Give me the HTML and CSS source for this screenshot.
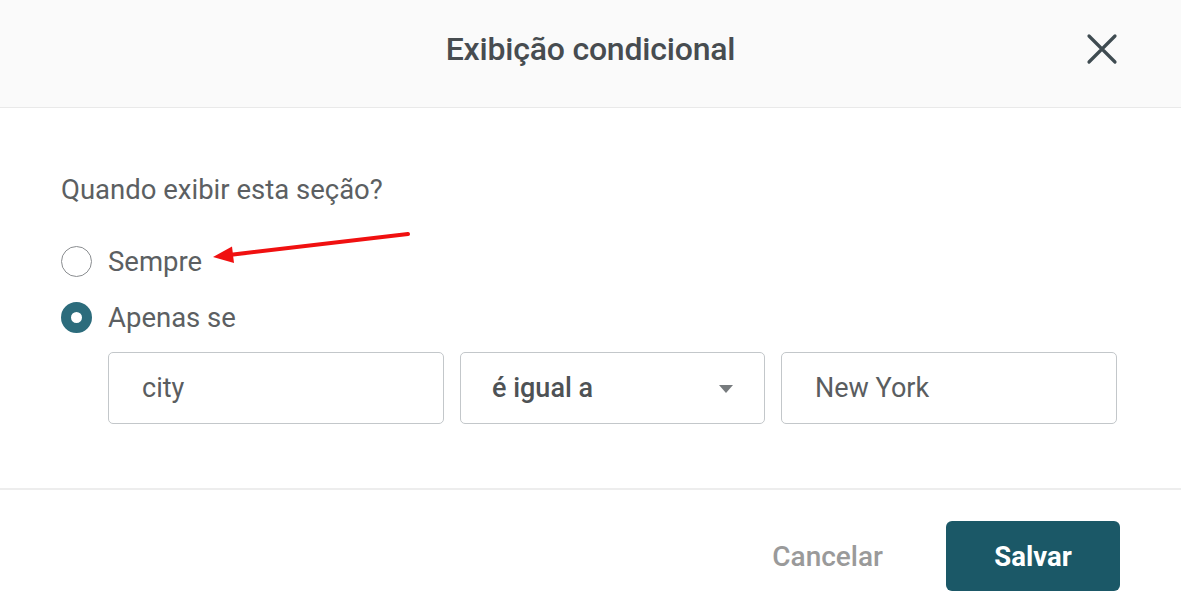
FILE: index.html
```
<!DOCTYPE html>
<html lang="pt">
<head>
<meta charset="utf-8">
<link rel="stylesheet" href="styles.css">
</head>
<body>
<div class="modal">
  <header class="header">
    <span></span>
    <h1 class="title">Exibição condicional</h1>
    <button class="close" aria-label="Fechar">
      <svg width="32" height="32" viewBox="0 0 32 32"><path d="M3 3 L29 29 M29 3 L3 29" stroke="#3f4b51" stroke-width="3.2" stroke-linecap="round" fill="none"/></svg>
    </button>
  </header>
  <section class="content">
    <p class="question">Quando exibir esta seção?</p>
    <div class="options">
      <label class="option"><span class="radio"></span><span class="option-label">Sempre</span></label>
      <label class="option"><span class="radio checked"></span><span class="option-label">Apenas se</span></label>
    </div>
    <div class="fields">
      <div class="field">city</div>
      <div class="field select"><span>é igual a</span><span class="caret"></span></div>
      <div class="field">New York</div>
    </div>
    <svg class="arrow" width="220" height="40" viewBox="0 0 220 40">
      <line x1="203" y1="6" x2="24" y2="27" stroke="#f01010" stroke-width="4" stroke-linecap="round"/>
      <polygon points="8,29 29,35 27,18.5" fill="#f01010"/>
    </svg>
  </section>
  <footer class="footer">
    <button class="btn-cancel">Cancelar</button>
    <button class="btn-save">Salvar</button>
  </footer>
</div>
</body>
</html>
```
FILE: styles.css
```
* { box-sizing: border-box; }
html, body { margin: 0; padding: 0; background: #fff; }
body { font-family: Roboto, "Liberation Sans", Arial, sans-serif; color: #555; width: 1181px; height: 602px; overflow: hidden; }
.modal { width: 1181px; }
.header {
  height: 108px;
  background: #fafafa;
  border-bottom: 1px solid #e9e9e9;
  display: grid;
  grid-template-columns: 1fr auto 1fr;
  align-items: center;
}
.title {
  margin: 0;
  font-size: 32px;
  font-weight: 500;
  color: #474c50;
  padding-bottom: 10px;
  letter-spacing: -0.2px;
}
.close {
  justify-self: end;
  margin-right: 63px;
  margin-bottom: 10px;
  border: 0;
  background: none;
  padding: 0;
  width: 32px;
  height: 32px;
  display: flex;
}
.content {
  position: relative;
  padding: 64px 64px 64px 61px;
  border-bottom: 2px solid #ededed;
}
.question {
  margin: 0 0 37px;
  font-size: 27.5px;
  line-height: 36px;
  color: #5c5f62;
}
.options { display: flex; flex-direction: column; gap: 24px; }
.option { display: flex; align-items: center; gap: 16px; height: 32px; }
.radio {
  width: 31px; height: 31px;
  border: 1.5px solid #8a8d90;
  border-radius: 50%;
  display: block;
}
.radio.checked {
  border: 10px solid #2c6c7c;
  background: #fff;
}
.option-label { font-size: 27.5px; color: #5c5f62; }
.fields {
  display: grid;
  grid-template-columns: 336px 305px 336px;
  gap: 16px;
  margin-top: 19px;
  margin-left: 47px;
}
.field {
  height: 72px;
  border: 1.5px solid #c3c7ca;
  border-radius: 5px;
  padding: 0 33px;
  display: flex;
  align-items: center;
  font-size: 27px;
  color: #5a5d60;
}
.field.select {
  justify-content: space-between;
  padding: 0 31px 0 31px;
  font-weight: 500;
  color: #4e5255;
}
.caret {
  width: 0; height: 0;
  border-left: 7px solid transparent;
  border-right: 7px solid transparent;
  border-top: 8px solid #777b7e;
  margin-top: 2px;
}
.arrow { position: absolute; left: 205px; top: 120px; }
.footer {
  display: flex;
  justify-content: flex-end;
  align-items: center;
  gap: 63px;
  padding: 31px 61px 0 0;
}
.btn-cancel {
  border: 0; background: none; padding: 0;
  font-family: inherit;
  font-size: 28px; font-weight: 500;
  color: #9a9a9a;
}
.btn-save {
  width: 174px; height: 70px;
  border: 0; border-radius: 6px;
  background: #1b5867;
  color: #fff;
  font-family: inherit;
  font-size: 27.5px; font-weight: 700;
}
```
